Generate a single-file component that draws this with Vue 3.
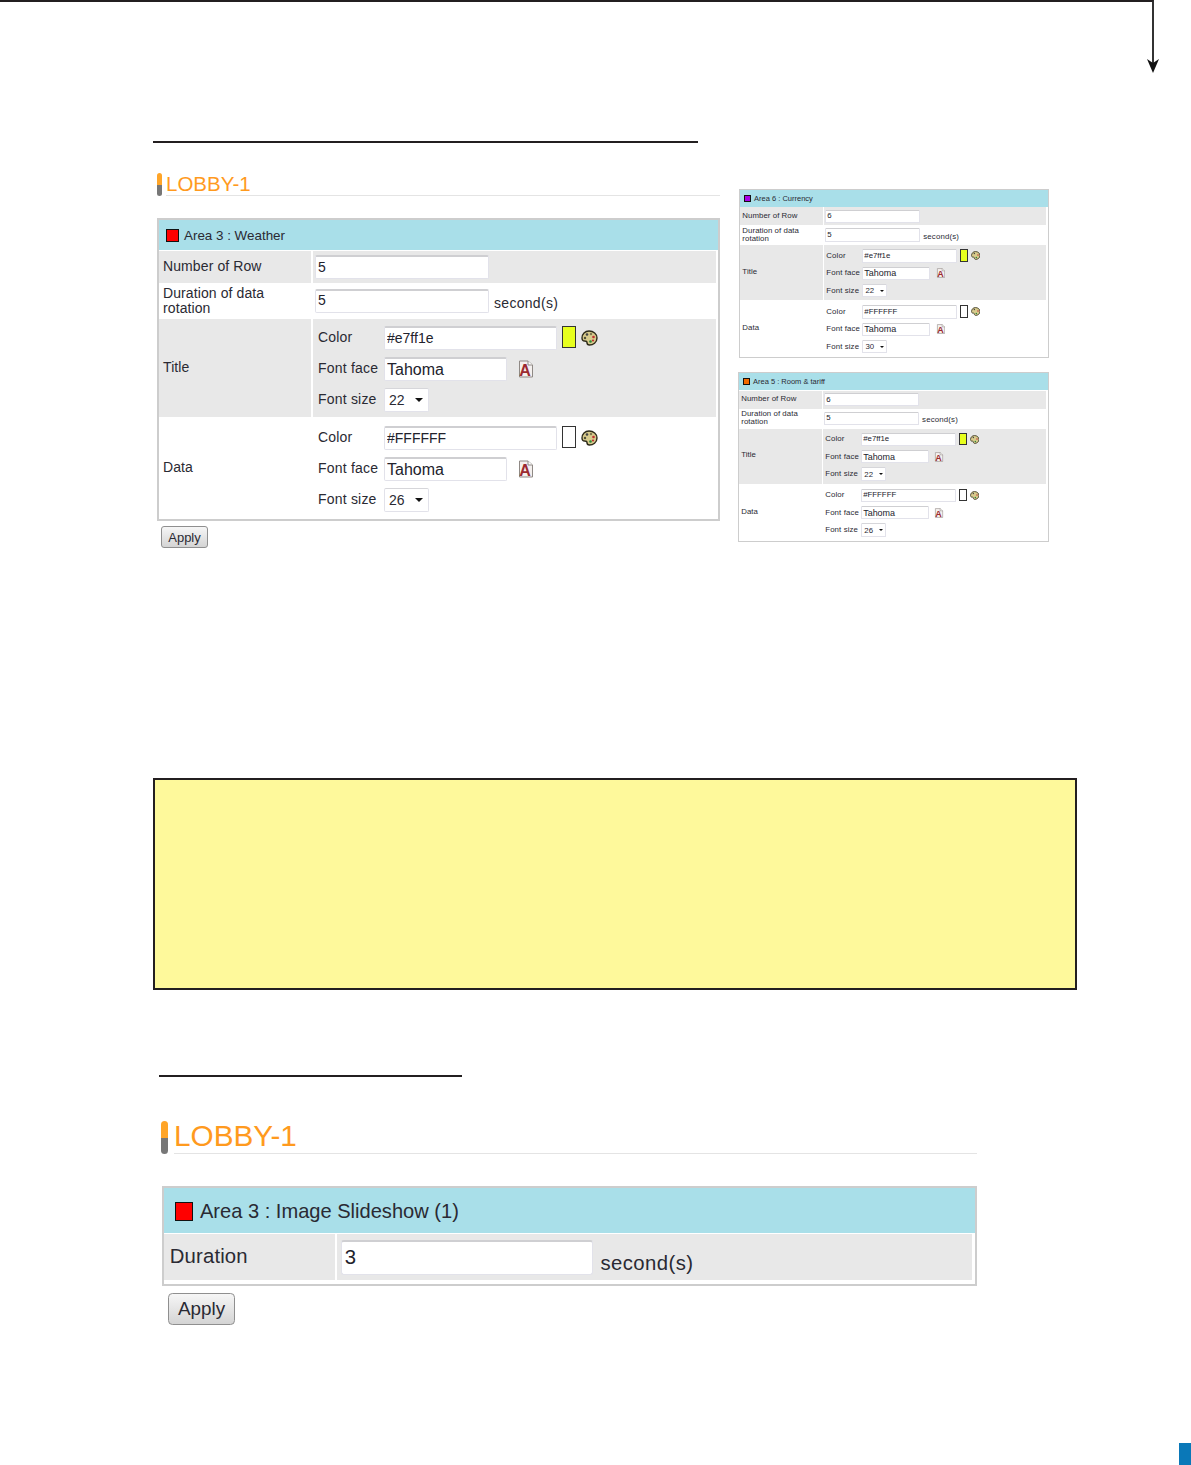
<script setup>
const makeGroups = (dataSize) => [
  { name: 'Title', cls: 'shade top7', color: '#e7ff1e', swatch: '#e7ff1e', size: '22' },
  { name: 'Data', cls: 'plain top8', color: '#FFFFFF', swatch: '#ffffff', size: dataSize }
]
const sidePanels = [
  { title: 'Area 6 : Currency', sw: '#a800e8', rows: '6', groups: makeGroups('30') },
  { title: 'Area 5 : Room & tariff', sw: '#f26a00', rows: '6', groups: makeGroups('26') }
]
const mainPanel = { title: 'Area 3 : Weather', sw: '#ff0000', rows: '5', groups: makeGroups('26') }
</script>

<template>
  <div class="page">
    <div class="connector">
      <svg class="arrowhead" width="12" height="14" viewBox="0 0 12 14"><path d="M0 0 L6 4 L12 0 L6 14 Z" fill="#111" /></svg>
    </div>

    <section class="first">
      <div class="rule wide"></div>
      <div class="columns">
        <div class="maincol">
          <div class="heading"><span class="bar"></span><span class="htext">LOBBY-1</span></div>
          <div class="panel">
            <div class="phead"><span class="sw" :style="{ background: mainPanel.sw }"></span>{{ mainPanel.title }}</div>
            <div class="row r1 shade">
              <div class="lab">Number of Row</div>
              <div class="val"><input class="inp w174" :value="mainPanel.rows" readonly /></div>
            </div>
            <div class="row r2 plain">
              <div class="lab">Duration of data<br />rotation</div>
              <div class="val"><input class="inp w174" value="5" readonly /><span class="unit">second(s)</span></div>
            </div>
            <div v-for="g in mainPanel.groups" :key="g.name" class="row group" :class="g.cls">
              <div class="lab">{{ g.name }}</div>
              <div class="fields">
                <div class="field">
                  <span class="flab">Color</span><input class="inp w173" :value="g.color" readonly />
                  <span class="chip" :style="{ background: g.swatch }"></span>
                  <svg class="palette" width="17" height="16" viewBox="0 0 17 16"><path d="M8 1 C12.5 1 16 4 16 8 C16 12.5 12 15 8.5 15 C6.5 15 6 13.5 6 12.5 C6 11 4.5 11 3.5 11 C2 11 1 10 1 8 C1 4 4 1 8 1 Z" fill="#d8cb8c" stroke="#2e2b1a" stroke-width="1.4" /><circle cx="6" cy="4.5" r="1.3" fill="#444" /><circle cx="10" cy="4" r="1.2" fill="#7d7850" /><circle cx="4" cy="8" r="1.2" fill="#4f4f38" /><circle cx="12.5" cy="7" r="1.3" fill="#c03030" /><circle cx="9.5" cy="11.5" r="1.3" fill="#2c8a3a" /><circle cx="12" cy="10.5" r="1.1" fill="#c03030" /></svg>
                </div>
                <div class="field">
                  <span class="flab">Font face</span><input class="inp w123 big" value="Tahoma" readonly />
                  <svg class="fonticon" width="17" height="18" viewBox="0 0 17 18"><path d="M2.5 1 H11 L15.5 5 V17 H2.5 Z" fill="#f4f0ee" stroke="#8f8985" /><path d="M11 1 V5 H15.5" fill="#fff" stroke="#8f8985" /><text x="8" y="16" class="ftext">A</text></svg>
                </div>
                <div class="field">
                  <span class="flab">Font size</span>
                  <span class="sel">{{ g.size }}<i class="caret"></i></span>
                </div>
              </div>
            </div>
          </div>
          <button class="apply">Apply</button>
        </div>

        <div class="sidecol">
          <div v-for="p in sidePanels" :key="p.title" class="panel small">
            <div class="phead"><span class="sw" :style="{ background: p.sw }"></span>{{ p.title }}</div>
            <div class="row r1 shade">
              <div class="lab">Number of Row</div>
              <div class="val"><input class="inp w174" :value="p.rows" readonly /></div>
            </div>
            <div class="row r2 plain">
              <div class="lab">Duration of data<br />rotation</div>
              <div class="val"><input class="inp w174" value="5" readonly /><span class="unit">second(s)</span></div>
            </div>
            <div v-for="g in p.groups" :key="g.name" class="row group" :class="g.cls">
              <div class="lab">{{ g.name }}</div>
              <div class="fields">
                <div class="field">
                  <span class="flab">Color</span><input class="inp w173" :value="g.color" readonly />
                  <span class="chip" :style="{ background: g.swatch }"></span>
                  <svg class="palette" width="17" height="16" viewBox="0 0 17 16"><path d="M8 1 C12.5 1 16 4 16 8 C16 12.5 12 15 8.5 15 C6.5 15 6 13.5 6 12.5 C6 11 4.5 11 3.5 11 C2 11 1 10 1 8 C1 4 4 1 8 1 Z" fill="#d8cb8c" stroke="#2e2b1a" stroke-width="1.4" /><circle cx="6" cy="4.5" r="1.3" fill="#444" /><circle cx="12.5" cy="7" r="1.3" fill="#c03030" /><circle cx="9.5" cy="11.5" r="1.3" fill="#2c8a3a" /></svg>
                </div>
                <div class="field">
                  <span class="flab">Font face</span><input class="inp w123 big" value="Tahoma" readonly />
                  <svg class="fonticon" width="17" height="18" viewBox="0 0 17 18"><path d="M2.5 1 H11 L15.5 5 V17 H2.5 Z" fill="#f4f0ee" stroke="#8f8985" /><path d="M11 1 V5 H15.5" fill="#fff" stroke="#8f8985" /><text x="8" y="16" class="ftext">A</text></svg>
                </div>
                <div class="field">
                  <span class="flab">Font size</span>
                  <span class="sel">{{ g.size }}<i class="caret"></i></span>
                </div>
              </div>
            </div>
          </div>
        </div>
      </div>
    </section>

    <div class="note"></div>

    <section class="second">
      <div class="rule narrow"></div>
      <div class="enlarged">
        <div class="heading"><span class="bar"></span><span class="htext">LOBBY-1</span></div>
        <div class="panel wide-panel">
          <div class="phead tall"><span class="sw" style="background:#ff0000"></span>Area 3 : Image Slideshow (1)</div>
          <div class="row r3 shade">
            <div class="lab">Duration</div>
            <div class="val"><input class="inp w174" value="3" readonly /><span class="unit low">second(s)</span></div>
          </div>
        </div>
        <button class="apply">Apply</button>
      </div>
    </section>

    <div class="tab"></div>
  </div>
</template>

<style scoped>
.page { width: 1191px; height: 1465px; overflow: hidden; background: #fff; color: #2a2a33; font-family: "Liberation Sans", Arial, sans-serif; font-size: 14px; }
.connector { position: relative; box-sizing: border-box; width: 1154px; height: 70px; border-top: 2px solid #231f20; border-right: 2px solid #333; }
.arrowhead { position: absolute; right: -7px; bottom: -3px; }
.first { margin: 71px 0 0 153px; }
.rule { border-top: 2px solid #231f20; }
.wide { width: 545px; }
.narrow { width: 303px; }
.columns { display: flex; margin: 30px 0 0 4px; }
.maincol { width: 563px; }
.sidecol { display: flex; flex-direction: column; gap: 14px; margin: 16px 0 0 18px; }
.heading { display: flex; height: 23px; }
.bar { width: 5px; height: 23px; margin-right: 4px; border-radius: 3px; background: linear-gradient(#ffa528 0 52%, #777 52% 100%); }
.htext { flex: 1; box-sizing: border-box; height: 23px; border-bottom: 1px solid #e4e4e4; color: #ff9a1e; font-size: 20.5px; line-height: 21px; }
.panel { box-sizing: border-box; width: 563px; margin-top: 22px; border: 2px solid #cdcdcd; background: #fff; }
.small { width: 555px; margin: 0; zoom: 0.56; }
.small .row { width: 549px; }
.small:first-child { width: 553px; margin-left: 2px; }
.small:first-child .row { width: 547px; }
.small .lab { width: 150px; }
.small .w174, .small .w173 { width: 170px; }
.small .w123 { width: 121px; }
.small .flab { width: 64px; }
.small .fields { padding-left: 4px; }
.wide-panel { width: 562.3px; margin: 21.7px 0 0 0.7px; padding-bottom: 2.5px; }
.phead { display: flex; align-items: center; gap: 5px; height: 30px; padding-left: 7px; background: #a9dfe9; font-size: 13.4px; }
.phead.tall { box-sizing: border-box; height: 31px; gap: 4.5px; padding: 2px 0 0 7.3px; font-size: 13.85px; }
.sw { box-sizing: border-box; width: 13px; height: 13px; border: 1px solid #111; }
.row { display: flex; width: 557px; font-size: 14px; }
.shade { background: #e8e8e8; }
.plain { background: #fff; }
.r1 { height: 32px; margin-top: 1px; }
.r2 { height: 35px; }
.r3 { height: 32px; margin-top: 1px; }
.group { height: 98px; margin-top: 1px; }
.group.plain { height: 101px; }
.lab { display: flex; align-items: center; box-sizing: border-box; width: 154px; padding: 0 0 2px 4px; border-right: 2px solid #fff; line-height: 15px; letter-spacing: 0.1px; }
.r2 .lab { padding-bottom: 0; }
.r3 .lab { width: 119px; padding-bottom: 0; }
.val { display: flex; align-items: center; padding-left: 2px; }
.r3 .val { padding-left: 3px; }
.r3 .inp { padding-bottom: 0; }
.inp { box-sizing: border-box; height: 24px; padding: 0 2px 2px; border: 1px solid #e2e2ea; border-top: 2px solid #cfcfd2; border-radius: 2px; background: #fff; color: #22222c; font: 14px "Liberation Sans", Arial, sans-serif; outline: none; }
.big { padding-bottom: 0; font-size: 16px; }
.w174 { width: 174px; }
.w173 { width: 173px; }
.w123 { width: 123px; }
.unit { margin-left: 5px; padding-top: 4px; letter-spacing: 0.3px; }
.low { padding-top: 8px; }
.fields { display: flex; flex-direction: column; gap: 7px; padding-left: 5px; }
.top7 .fields { padding-top: 7px; }
.top8 .fields { padding-top: 8px; }
.field { display: flex; align-items: center; height: 24px; }
.flab { width: 66px; flex: none; padding-bottom: 2px; letter-spacing: 0.2px; }
.chip { box-sizing: border-box; width: 14px; height: 22px; margin: -2px 0 0 5px; border: 1px solid #333; }
.palette { margin: -1px 0 0 5px; }
.fonticon { margin-left: 10px; }
.ftext { font: bold 16px "Liberation Sans", sans-serif; fill: #9c2a30; text-anchor: middle; }
.sel { display: flex; align-items: center; box-sizing: border-box; width: 45px; height: 24px; padding-left: 4px; border: 1px solid #e2e2ea; border-top-color: #d6d6da; border-radius: 2px; background: #fff; }
.caret { width: 0; height: 0; margin-left: 10px; border: 4px solid transparent; border-top-color: #111; border-bottom: 0; }
.apply { display: block; box-sizing: border-box; width: 47px; height: 22px; margin: 5px 0 0 4px; padding: 0; border: 1px solid #8f8f8f; border-radius: 3px; background: linear-gradient(#f6f6f6, #d4d4d4); color: #2a2a33; font: 13px "Liberation Sans", Arial, sans-serif; }
.enlarged .apply { width: 46px; margin-left: 5px; }
.note { box-sizing: border-box; width: 924px; height: 212px; margin: 230px 0 0 153px; border: 2px solid #231f20; background: #fef99b; }
.second { margin: 85px 0 0 159px; }
.enlarged { width: 563px; margin: 30.3px 0 0 1.4px; zoom: 1.45; }
.tab { width: 12px; height: 22px; margin: 118px 0 0 1179px; background: #0a78b8; }
</style>

<style>
html, body { margin: 0; background: #fff; }
</style>
